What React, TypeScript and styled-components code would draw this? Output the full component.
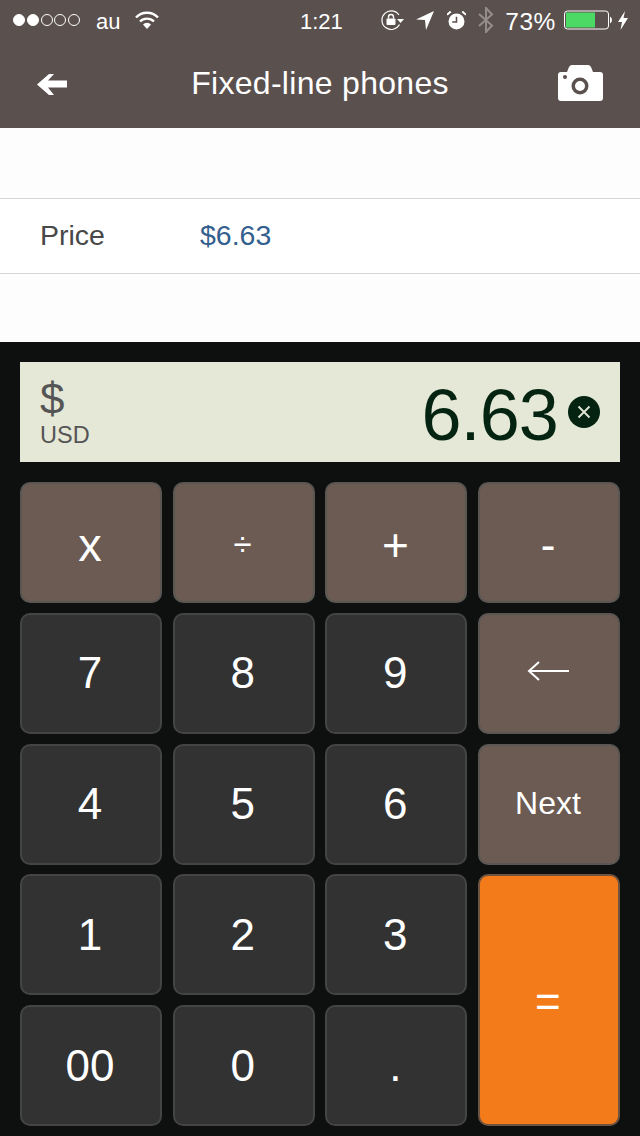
import React from 'react';
import styled, { createGlobalStyle } from 'styled-components';

const Global = createGlobalStyle`
  html, body { margin: 0; padding: 0; background: #0e1010; }
  body { font-family: "Liberation Sans", Arial, sans-serif; }
`;

const Page = styled.div`
  width: 640px;
  height: 1136px;
  display: flex;
  flex-direction: column;
  overflow: hidden;
`;

const Header = styled.header`
  height: 128px;
  flex: none;
  background: #5a504e;
  color: #fff;
  display: flex;
  flex-direction: column;
`;

const StatusBar = styled.div`
  height: 40px;
  padding: 0 12px 0 13px;
  display: flex;
  align-items: center;
  justify-content: space-between;
  position: relative;
`;

const StatusGroup = styled.div`
  display: flex;
  align-items: center;
`;

const Signal = styled.div`
  display: flex;
  gap: 1.75px;
  margin-right: 16px;
`;

const Dot = styled.span<{ $on?: boolean }>`
  width: 12px;
  height: 12px;
  box-sizing: border-box;
  border-radius: 50%;
  border: 1px solid #fff;
  background: ${(p) => (p.$on ? '#fff' : 'transparent')};
`;

const Carrier = styled.span`
  font-size: 22px;
  margin-right: 15px;
  padding-top: 3px;
`;

const Clock = styled.span`
  position: absolute;
  left: 300px;
  top: 9px;
  font-size: 22px;
`;

const Percent = styled.span`
  font-size: 24.5px;
  letter-spacing: 0.6px;
  margin: 0 8px 0 11px;
  padding-top: 3px;
`;

const NavBar = styled.nav`
  flex: 1;
  display: grid;
  grid-template-columns: 1fr auto 1fr;
  align-items: center;
  padding: 0 37px 2px;
`;

const NavStart = styled.div`
  display: flex;
  padding-top: 3px;
`;

const NavEnd = styled.div`
  display: flex;
  justify-content: flex-end;
`;

const Title = styled.h1`
  margin: 0;
  font-size: 32px;
  font-weight: 400;
  letter-spacing: 0.3px;
`;

const Sheet = styled.section`
  height: 214px;
  flex: none;
  background: #fdfdfd;
  padding-top: 70px;
  box-sizing: border-box;
`;

const Row = styled.div`
  height: 76px;
  box-sizing: border-box;
  border-top: 1px solid #d6d6d6;
  border-bottom: 1px solid #d6d6d6;
  background: #fff;
  display: flex;
  align-items: center;
  padding: 0 40px 2px;
  font-size: 28.5px;
`;

const RowLabel = styled.span`
  width: 160px;
  color: #484848;
`;

const RowValue = styled.span`
  color: #33608f;
`;

const Calc = styled.section`
  flex: 1;
  background: #0e1010;
  padding: 20px 20px 0;
`;

const Display = styled.div`
  height: 100px;
  background: #e5e8d6;
  display: flex;
  align-items: center;
  justify-content: space-between;
  padding: 0 20px;
`;

const Currency = styled.div`
  color: #555;
  display: flex;
  flex-direction: column;
  margin-top: 1px;
`;

const Symbol = styled.span`
  font-size: 44px;
  line-height: 44px;
`;

const Code = styled.span`
  font-size: 23.5px;
  line-height: 28px;
`;

const Amount = styled.div`
  display: flex;
  align-items: center;
  gap: 10px;
  color: #042411;
`;

const Value = styled.span`
  font-size: 72px;
  letter-spacing: -0.9px;
  line-height: 100px;
  padding-top: 5px;
`;

const Keys = styled.div`
  margin-top: 20px;
  display: grid;
  grid-template-columns: repeat(4, 142px);
  grid-template-rows: repeat(5, 121px);
  column-gap: 10.67px;
  row-gap: 9.8px;
`;

const tones = {
  num: { bg: '#323232', border: '#444444' },
  op: { bg: '#6c5b52', border: '#5a5654' },
  eq: { bg: '#f47b1a', border: '#6e5440' },
};

const Key = styled.button<{
  $tone: keyof typeof tones;
  $tall?: boolean;
  $size?: number;
  $drop?: number;
  $lift?: number;
}>`
  appearance: none;
  margin: 0;
  padding: ${(p) => p.$drop ?? 0}px 2px ${(p) => p.$lift ?? 0}px 0;
  border-radius: 10px;
  border: 2px solid ${(p) => tones[p.$tone].border};
  background: ${(p) => tones[p.$tone].bg};
  color: #fff;
  font-family: inherit;
  font-size: ${(p) => p.$size ?? 44}px;
  display: flex;
  align-items: center;
  justify-content: center;
  grid-row: ${(p) => (p.$tall ? 'span 2' : 'auto')};
`;

const BackIcon = () => (
  <svg width="30" height="21" viewBox="0 0 30 21">
    <path d="M0 10.5 L12 0 L17 0 L11 6.5 L30 6.5 L30 13.5 L11 13.5 L17 21 L12 21 Z" fill="#fff" />
  </svg>
);

const CameraIcon = () => (
  <svg width="45" height="36" viewBox="0 0 45 36">
    <path
      fillRule="evenodd"
      fill="#fff"
      d="M3 7 H9 L11 2 Q12 0 14 0 H30 Q32 0 33 2 L35 7 H42 Q45 7 45 10 V33 Q45 36 42 36 H3 Q0 36 0 33 V10 Q0 7 3 7 Z M22 12.500 A8.500 8.500 0 1 0 22 29.500 A8.500 8.500 0 1 0 22 12.500 Z M22 16 A5 5 0 1 1 22 26 A5 5 0 1 1 22 16 Z"
    />
    <circle cx="7" cy="12" r="2" fill="#5a504e" />
  </svg>
);

const WifiIcon = () => (
  <svg width="24" height="18" viewBox="0 0 24 18" fill="none" stroke="#fff" strokeWidth="2.4">
    <path d="M1 6.500 A15 15 0 0 1 23 6.500" />
    <path d="M5 10.500 A10 10 0 0 1 19 10.500" />
    <path d="M12 18 L8 13.400 A5.800 5.800 0 0 1 16 13.400 Z" fill="#fff" stroke="none" />
  </svg>
);

const RotationLock = () => (
  <svg width="23" height="20" viewBox="0 0 23 20" style={{ marginRight: 12 }}>
    <path d="M18.500 14.500 A9.300 9.300 0 1 1 18 5" fill="none" stroke="#fff" strokeWidth="1.200" />
    <path d="M16 9 L23 9 L19.500 13 Z" fill="#fff" />
    <rect x="5.500" y="8.500" width="9" height="6.500" rx="1" fill="#fff" />
    <path d="M7.500 8.500 V7 A2.500 2.500 0 0 1 12.500 7 V8.500" fill="none" stroke="#fff" strokeWidth="1.400" />
  </svg>
);

const LocationIcon = () => (
  <svg width="18" height="19" viewBox="0 0 18 19" style={{ marginRight: 13 }}>
    <path d="M0 8.500 L18 0 L10 19 L9 9 Z" fill="#fff" />
  </svg>
);

const AlarmIcon = () => (
  <svg width="19" height="19" viewBox="0 0 20 20" style={{ marginRight: 12 }}>
    <circle cx="10" cy="11" r="8.400" fill="#fff" />
    <path d="M10 6 V11.500 H5.500" fill="none" stroke="#5a504e" strokeWidth="1.600" />
    <path d="M0 4 L4 0.500 M20 4 L16 0.500" stroke="#fff" strokeWidth="2" />
  </svg>
);

const BluetoothIcon = () => (
  <svg width="16" height="26" viewBox="0 0 16 26" fill="none" stroke="#958d8b" strokeWidth="2">
    <path d="M1 7 L14 18.500 L8 25 V1 L14 7.500 L1 19" />
  </svg>
);

const Battery = () => (
  <svg width="48" height="20" viewBox="0 0 48 20" style={{ marginRight: 6 }}>
    <rect x="0.500" y="1" width="44" height="18" rx="3" fill="none" stroke="#fff" />
    <rect x="2" y="2.500" width="29" height="15" fill="#4cd964" />
    <path d="M46 6.500 Q48 7.500 48 10 Q48 12.500 46 13.500 Z" fill="#fff" />
  </svg>
);

const Bolt = () => (
  <svg width="10" height="19" viewBox="0 0 10 19">
    <path d="M7 0 L0 11 H4 L2.500 19 L10 7 H5.500 Z" fill="#fff" />
  </svg>
);

const ClearIcon = () => (
  <svg width="32" height="32" viewBox="0 0 32 32">
    <circle cx="16" cy="16" r="16" fill="#042411" />
    <path d="M10.500 10.500 L21.500 21.500 M21.500 10.500 L10.500 21.500" stroke="#e5e8d6" strokeWidth="1.800" />
  </svg>
);

const BackspaceIcon = () => (
  <svg width="42" height="20" viewBox="0 0 42 20" fill="none" stroke="#fff" strokeWidth="2" style={{ marginBottom: 4 }}>
    <path d="M42 10 H2 M12 1 L2 10 L12 19" />
  </svg>
);

export default function App() {
  return (
    <Page>
      <Global />
      <Header>
        <StatusBar>
          <StatusGroup>
            <Signal>
              <Dot $on />
              <Dot $on />
              <Dot />
              <Dot />
              <Dot />
            </Signal>
            <Carrier>au</Carrier>
            <WifiIcon />
          </StatusGroup>
          <Clock>1:21</Clock>
          <StatusGroup>
            <RotationLock />
            <LocationIcon />
            <AlarmIcon />
            <BluetoothIcon />
            <Percent>73%</Percent>
            <Battery />
            <Bolt />
          </StatusGroup>
        </StatusBar>
        <NavBar>
          <NavStart><BackIcon /></NavStart>
          <Title>Fixed-line phones</Title>
          <NavEnd><CameraIcon /></NavEnd>
        </NavBar>
      </Header>
      <Sheet>
        <Row>
          <RowLabel>Price</RowLabel>
          <RowValue>$6.63</RowValue>
        </Row>
      </Sheet>
      <Calc>
        <Display>
          <Currency>
            <Symbol>$</Symbol>
            <Code>USD</Code>
          </Currency>
          <Amount>
            <Value>6.63</Value>
            <ClearIcon />
          </Amount>
        </Display>
        <Keys>
          <Key $tone="op" $size={47} $drop={4}>x</Key>
          <Key $tone="op" $size={33} $drop={4}>÷</Key>
          <Key $tone="op" $size={46} $drop={4}>+</Key>
          <Key $tone="op" $drop={4}>-</Key>
          <Key $tone="num">7</Key>
          <Key $tone="num">8</Key>
          <Key $tone="num">9</Key>
          <Key $tone="op"><BackspaceIcon /></Key>
          <Key $tone="num">4</Key>
          <Key $tone="num">5</Key>
          <Key $tone="num">6</Key>
          <Key $tone="op" $size={32} $lift={2}>Next</Key>
          <Key $tone="num">1</Key>
          <Key $tone="num">2</Key>
          <Key $tone="num">3</Key>
          <Key $tone="eq" $tall $drop={4}>=</Key>
          <Key $tone="num">00</Key>
          <Key $tone="num">0</Key>
          <Key $tone="num">.</Key>
        </Keys>
      </Calc>
    </Page>
  );
}
